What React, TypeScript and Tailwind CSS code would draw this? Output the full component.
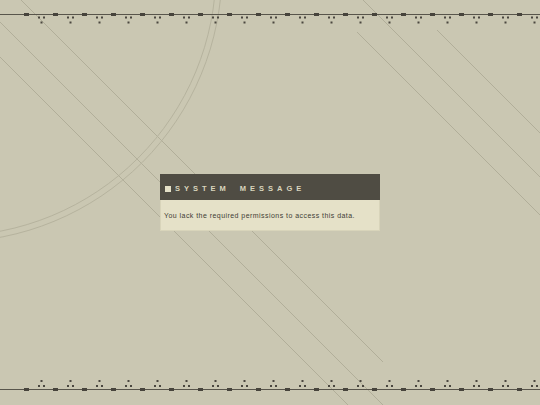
import React from "react";

const DASH_XS = Array.from({ length: 18 }, (_, k) => 24 + 29 * k);

// Horizontal rule with square dashes and three-dot triads hanging off it.
function Ornament({ flip }: { flip?: boolean }) {
  const lineY = flip ? 12 : 14;
  return (
    <svg width={540} height={28} viewBox="0 0 540 28" className="relative block shrink-0">
      <rect x={0} y={lineY} width={540} height={1} fill="#58554b" />
      {DASH_XS.map((x) => (
        <rect key={`d${x}`} x={x} y={lineY - 1} width={5} height={3} fill="#47443c" />
      ))}
      {DASH_XS.map((x) => {
        const pairY = flip ? lineY - 4 : lineY + 2.5;
        const singleY = flip ? lineY - 9 : lineY + 7.5;
        return (
          <g key={`t${x}`} fill="#4a473f">
            <rect x={x + 14} y={pairY} width={2} height={2} />
            <rect x={x + 19} y={pairY} width={2} height={2} />
            <rect x={x + 16.5} y={singleY} width={2} height={2} />
          </g>
        );
      })}
    </svg>
  );
}

// Faint construction lines and the double arc drawn behind everything.
function Backdrop() {
  const stroke = "#b1ae99";
  return (
    <svg
      width={540}
      height={405}
      viewBox="0 0 540 405"
      className="absolute inset-0 pointer-events-none"
      fill="none"
    >
      <g stroke={stroke} strokeWidth={1}>
        <line x1={0} y1={57} x2={348} y2={405} />
        <line x1={0} y1={22} x2={383} y2={405} />
        <line x1={21} y1={0} x2={383} y2={362} />
        <line x1={363} y1={0} x2={540} y2={177} />
        <line x1={357} y1={32} x2={540} y2={215} />
        <line x1={437} y1={30} x2={540} y2={133} />
      </g>
      <g stroke="#b6b39e" strokeWidth={1}>
        <circle cx={-50} cy={-30} r={266} />
        <circle cx={-50} cy={-30} r={272} />
      </g>
    </svg>
  );
}

export default function App() {
  return (
    <div className="relative flex h-[405px] w-[540px] flex-col overflow-hidden bg-[#cac7b2] font-['Liberation_Sans',Arial,sans-serif]">
      <Backdrop />
      <Ornament />
      <main className="relative flex flex-1 items-center justify-center">
        <section className="flex w-[220px] flex-col">
          <header className="flex h-[26px] items-center bg-[#4f4c43] pl-[5px] pt-[3px]">
            <span className="mr-[4px] h-[6px] w-[6px] bg-[#e4e0c7]" />
            <span className="text-[7.5px] font-bold leading-none tracking-[4px] text-[#d9d5bd]">
              SYSTEM
            </span>
            <span className="ml-[10px] text-[7.5px] font-bold leading-none tracking-[4px] text-[#d9d5bd]">
              MESSAGE
            </span>
          </header>
          <div className="flex h-[31px] items-center border border-t-0 border-[#d8d4ba] bg-[#e5e1c8] pl-[3px]">
            <p className="text-[7px] leading-none tracking-[0.45px] text-[#3f3d36]">
              You lack the required permissions to access this data.
            </p>
          </div>
        </section>
      </main>
      <Ornament flip />
    </div>
  );
}
